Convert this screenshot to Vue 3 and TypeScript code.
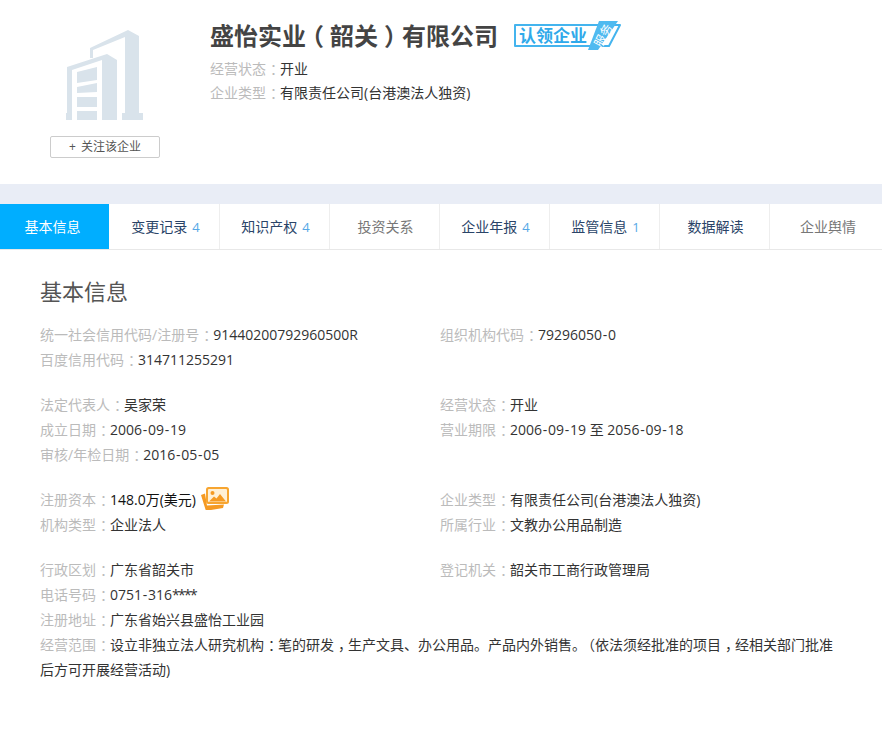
<script setup lang="ts">
import { h } from 'vue'

interface Tab { name: string; count?: number; active?: boolean; muted?: boolean }
interface Field { label: string; value: string; icon?: boolean }
interface Group { left: Field[]; right: Field[] }

const tabs: Tab[] = [
  { name: '基本信息', active: true },
  { name: '变更记录', count: 4 },
  { name: '知识产权', count: 4 },
  { name: '投资关系', muted: true },
  { name: '企业年报', count: 4 },
  { name: '监管信息', count: 1 },
  { name: '数据解读' },
  { name: '企业舆情', muted: true },
]

const groups: Group[] = [
  {
    left: [
      { label: '统一社会信用代码/注册号：', value: '91440200792960500R' },
      { label: '百度信用代码：', value: '314711255291' },
    ],
    right: [{ label: '组织机构代码：', value: '79296050-0' }],
  },
  {
    left: [
      { label: '法定代表人：', value: '吴家荣' },
      { label: '成立日期：', value: '2006-09-19' },
      { label: '审核/年检日期：', value: '2016-05-05' },
    ],
    right: [
      { label: '经营状态：', value: '开业' },
      { label: '营业期限：', value: '2006-09-19 至 2056-09-18' },
    ],
  },
  {
    left: [
      { label: '注册资本：', value: '148.0万(美元)', icon: true },
      { label: '机构类型：', value: '企业法人' },
    ],
    right: [
      { label: '企业类型：', value: '有限责任公司(台港澳法人独资)' },
      { label: '所属行业：', value: '文教办公用品制造' },
    ],
  },
  {
    left: [
      { label: '行政区划：', value: '广东省韶关市' },
      { label: '电话号码：', value: '0751-316****' },
      { label: '注册地址：', value: '广东省始兴县盛怡工业园' },
    ],
    right: [{ label: '登记机关：', value: '韶关市工商行政管理局' }],
  },
]

// Punctuation sits centred in its cell in the original typeface, so each mark gets its own span.
const Txt = (props: { s: string }) =>
  props.s.split(/([：，（]|-|\*)/).filter(Boolean).map((t) => {
    if (t === '：' || t === '，') return h('span', { class: 'txt-mark' }, t)
    if (t === '（') return h('span', { class: 'txt-paren' }, t)
    if (t === '-') return h('span', { class: 'txt-hyphen' }, t)
    if (t === '*') return h('span', { class: 'txt-star' }, t)
    return t
  })
Txt.props = ['s']

const scope = '设立非独立法人研究机构：笔的研发，生产文具、办公用品。产品内外销售。（依法须经批准的项目，经相关部门批准后方可开展经营活动)'
</script>

<template>
  <div class="page">
    <header class="head">
      <div class="logo-col">
        <svg class="building" width="78" height="90" viewBox="66 30 78 90">
          <path fill="#d9e3eb" d="M90 58V48l38-18 11 6v77h4v7h-21v-7h3V37L93 50v8z" />
          <path fill="#d9e3eb" d="M66 120v-7h1V67l40-13 10 6v60H102V60L72 70v50z" />
          <path fill="#d9e3eb" d="M77 72l20-5v13l-20 3zM77 87l20-4v9l-20 1zM77 97h20v10H77zM77 111h20v9H77z" />
        </svg>
        <button class="follow"><span class="plus">+</span>关注该企业</button>
      </div>
      <div class="head-main">
        <div class="title-row">
          <h1 class="title">盛怡实业<span class="paren">（</span>韶关<span class="paren">）</span>有限公司</h1>
          <span class="claim">
            <svg class="claim-bg" width="110" height="30" viewBox="0 0 110 30">
              <path fill="#fff" stroke="#44b4ee" stroke-width="2" stroke-linejoin="round" d="M2 4h105L96 25H2z" />
              <path fill="#4fbaf0" d="M86 0h19L85 29H75z" />
            </svg>
            <span class="claim-text">认领企业</span>
            <span class="claim-tag">服务</span>
          </span>
        </div>
        <div class="head-line"><span class="label"><Txt s="经营状态：" /></span><span class="value">开业</span></div>
        <div class="head-line"><span class="label"><Txt s="企业类型：" /></span><span class="value">有限责任公司(台港澳法人独资)</span></div>
      </div>
    </header>

    <div class="band"></div>

    <nav class="tabs">
      <div
        v-for="tab in tabs"
        :key="tab.name"
        class="tab"
        :class="{ active: tab.active, muted: tab.muted }"
      >
        {{ tab.name }}<span v-if="tab.count" class="count">{{ tab.count }}</span>
      </div>
    </nav>

    <section class="info">
      <h2 class="section-title">基本信息</h2>
      <div v-for="(group, i) in groups" :key="i" class="group">
        <div class="col">
          <div v-for="f in group.left" :key="f.label" class="row">
            <span class="label"><Txt :s="f.label" /></span><span class="value" :class="{ strong: f.icon }"><Txt :s="f.value" /></span>
            <svg v-if="f.icon" class="pic" width="30" height="24" viewBox="0 0 30 24">
              <path fill="#f59a23" d="M1 9l4-1.500 2 12 17-1-1 3.500L8 24.500a2 2 0 0 1-2.500-1z" />
              <rect x="6" y="1" width="23" height="17" rx="2.500" fill="#f7a530" />
              <rect x="8" y="3" width="19" height="13" rx="1" fill="#fff0d6" />
              <circle cx="12.500" cy="7" r="2" fill="#f59a23" />
              <path fill="#f59a23" d="M9 15.500l5-5 2.500 2 3.500-4.500 6 7.500z" />
            </svg>
          </div>
        </div>
        <div class="col">
          <div v-for="f in group.right" :key="f.label" class="row">
            <span class="label"><Txt :s="f.label" /></span><span class="value"><Txt :s="f.value" /></span>
          </div>
        </div>
      </div>
      <div class="scope">
        <span class="label"><Txt s="经营范围：" /></span><span class="value"><Txt :s="scope" /></span>
      </div>
    </section>
  </div>
</template>

<style>
.txt-mark {
  margin: 0 3px 0 4px;
  font-feature-settings: "halt";
}
.txt-paren {
  margin-left: 2px;
}
.txt-hyphen {
  margin: 0 .75px;
}
.txt-star {
  letter-spacing: -1.7px;
}
</style>

<style scoped>
.page {
  width: 882px;
  height: 742px;
  overflow: hidden;
  background: #fff;
  font-family: "Open Sans", "Noto Sans CJK SC", sans-serif;
  font-size: 14px;
  color: #333;
}
.head {
  display: flex;
  height: 184px;
  box-sizing: border-box;
}
.logo-col {
  width: 210px;
  box-sizing: border-box;
  padding: 30px 0 0 50px;
}
.building {
  display: block;
  margin-left: 16px;
}
.follow {
  display: block;
  width: 110px;
  height: 22px;
  margin-top: 16px;
  padding: 0;
  border: 1px solid #ccc;
  border-radius: 2px;
  background: #fff;
  font: inherit;
  font-size: 12px;
  line-height: 20px;
  color: #555;
}
.plus {
  margin-right: 5px;
}
.head-main {
  flex: 1;
  padding-top: 18px;
}
.title-row {
  display: flex;
  align-items: center;
  height: 36px;
  margin-bottom: 3px;
}
.title {
  margin: 0;
  font-size: 24px;
  font-weight: 700;
  line-height: 36px;
  color: #444;
}
.paren {
  margin: 0 6px;
  font-feature-settings: "halt";
}
.claim {
  position: relative;
  display: block;
  width: 110px;
  height: 30px;
  margin-left: 15px;
}
.claim-bg {
  position: absolute;
  left: 0;
  top: 0;
}
.claim-text {
  position: absolute;
  left: 6px;
  top: 2px;
  font-size: 17px;
  font-weight: 700;
  line-height: 26px;
  color: #2fa9ea;
}
.claim-tag {
  position: absolute;
  left: 78px;
  top: 7px;
  font-size: 12px;
  line-height: 15px;
  color: #fff;
  transform: rotate(-62deg);
}
.head-line {
  height: 24px;
  line-height: 24px;
}
.label {
  color: #bbb;
}
.value {
  color: #333;
}
.band {
  height: 20px;
  background: #e9edf6;
}
.tabs {
  display: flex;
  height: 46px;
  box-sizing: border-box;
  border-bottom: 1px solid #e8e8e8;
}
.tab {
  flex: 0 0 110px;
  box-sizing: border-box;
  padding-left: 2px;
  border-right: 1px solid #eee;
  text-align: center;
  line-height: 45px;
  color: #2a4468;
}
.tab:last-child {
  flex: 1;
  padding-left: 4px;
  border-right: 0;
}
.tab.active {
  padding: 0 4px 0 0;
  border-right: 1px solid #fff;
  background: #00aeff;
  background-clip: padding-box;
  color: #fff;
}
.tab.muted {
  color: #777;
}
.count {
  margin-left: 5px;
  font-size: 13px;
  color: #56a8e6;
}
.info {
  padding: 0 40px;
}
.section-title {
  margin: 22px 0 12px;
  font-size: 22px;
  font-weight: 400;
  line-height: 38px;
  color: #555;
}
.group {
  display: flex;
}
.group + .group {
  margin-top: 20px;
}
.col {
  flex: 0 0 400px;
}
.row {
  display: flex;
  align-items: center;
  height: 25px;
  line-height: 25px;
  white-space: pre;
}
.value.strong {
  color: #111;
}
.pic {
  margin: -4px 0 0 4px;
}
.scope {
  line-height: 25px;
  width: 802px;
}
</style>
